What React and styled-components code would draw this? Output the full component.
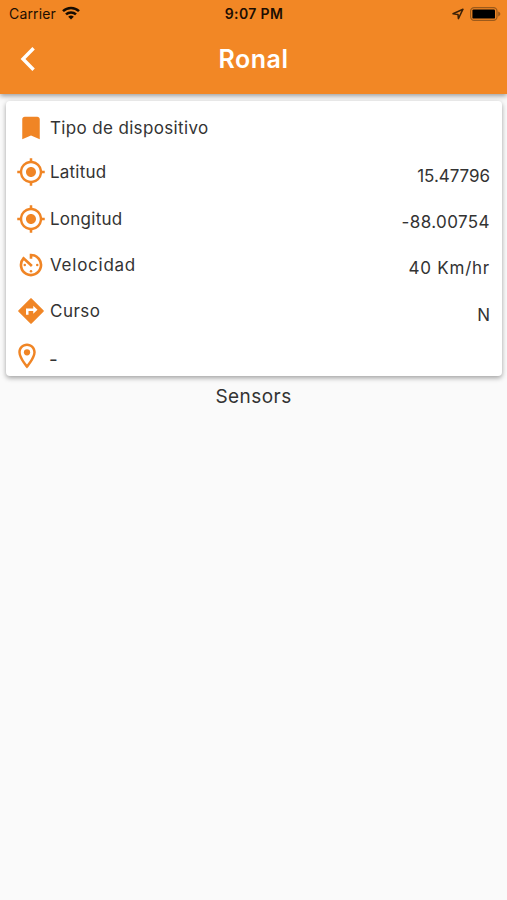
import React from 'react'
import styled, { createGlobalStyle } from 'styled-components'
import { MdBookmark, MdMyLocation, MdOutlineLocationOn } from 'react-icons/md'

function TurnIcon() {
  return (
    <svg width="1em" height="1em" viewBox="0 0 24 24">
      <path d="M12 2.2 21.8 12 12 21.8 2.2 12z" fill="currentColor" stroke="currentColor" strokeWidth="0.9" strokeLinejoin="round" />
      <path d="M9 15v-4.1h5.4" fill="none" stroke="#fff" strokeWidth="2" />
      <path d="M13.8 7.7 17.2 10.9l-3.4 3.3z" fill="#fff" />
    </svg>
  )
}

function SpeedIcon() {
  return (
    <svg width="1em" height="1em" viewBox="0 0 24 24" fill="none" stroke="currentColor" strokeWidth="2.1">
      <path d="M12 7V4a8 8 0 1 1-5.9 2.6l6.6 6.2" />
      <g fill="currentColor" stroke="none">
        <circle cx="12" cy="17" r="1" />
        <circle cx="17" cy="12" r="1" />
        <circle cx="7" cy="12" r="1" />
      </g>
    </svg>
  )
}

const rows = [
    { icon: MdMyLocation, label: 'Latitud', value: '15.47796', spacing: '0.2px', valueSpacing: '-0.05px' },
    { icon: MdMyLocation, label: 'Longitud', value: '-88.00754', spacing: '0.25px', valueSpacing: '0.4px' },
    { icon: SpeedIcon, label: 'Velocidad', value: '40 Km/hr', spacing: '0.75px', valueSpacing: '0.75px' },
    { icon: TurnIcon, label: 'Curso', value: 'N', spacing: '0.5px', valueSpacing: '0px' },
]

function StatusBar() {
  return (
    <Status>
      <Carrier>
        <span>Carrier</span>
        <svg width="18" height="14" viewBox="0 0 18 14" fill="none" stroke="#160c02" strokeWidth="2.5">
          <path d="M1 5.2a11.5 11.5 0 0 1 16 0" />
          <path d="M4 8.4a7.2 7.2 0 0 1 10 0" />
          <path d="M9 13.6 6.2 10.8a4 4 0 0 1 5.6 0z" fill="#160c02" stroke="none" />
        </svg>
      </Carrier>
      <Clock>9:07 PM</Clock>
      <StatusIcons>
        <svg width="12" height="12" viewBox="0 0 12 12" fill="none" stroke="#3b2108" strokeWidth="1.5" strokeLinejoin="round">
          <path d="M1 5.8 11 1.2 6.4 10.6 6 6.4z" />
        </svg>
        <svg width="31" height="14" viewBox="0 0 31 14">
          <rect x="0.6" y="0.6" width="26.4" height="12.8" rx="3.6" fill="none" stroke="#9c5a1b" strokeWidth="1.2" />
          <rect x="2.4" y="2.4" width="22.6" height="9.2" rx="1.2" fill="#000" />
          <path d="M28.2 4.6c2.8.8 2.8 4 0 4.8z" fill="#9c5a1b" />
        </svg>
      </StatusIcons>
    </Status>
  )
}

export default function App() {
  return (
    <>
      <GlobalStyle />
      <Screen>
        <Header>
          <StatusBar />
          <Toolbar>
            <BackButton aria-label="Back">
              <svg width="16" height="26" viewBox="0 0 16 26" fill="none" stroke="#fff" strokeWidth="3.4">
                <path d="M13.6 2.2 3 13l10.6 10.8" />
              </svg>
            </BackButton>
            <Title>Ronal</Title>
          </Toolbar>
        </Header>
        <Card>
          <TypeRow>
            <IconBox><MdBookmark /></IconBox>
            <Label $spacing="0.35px">Tipo de dispositivo</Label>
          </TypeRow>
          {rows.map(({ icon: Icon, label, value, spacing, valueSpacing }) => (
            <Row key={label}>
              <IconBox><Icon /></IconBox>
              <Label $spacing={spacing}>{label}</Label>
              <Value $spacing={valueSpacing}>{value}</Value>
            </Row>
          ))}
          <AddressRow>
            <IconBox><MdOutlineLocationOn /></IconBox>
            <Address>-</Address>
          </AddressRow>
        </Card>
        <SectionTitle>Sensors</SectionTitle>
      </Screen>
    </>
  )
}

const GlobalStyle = createGlobalStyle`
  * {
    box-sizing: border-box;
  }
  body {
    margin: 0;
    background: #fafafa;
    font-family: Inter, "Liberation Sans", sans-serif;
    color: #333;
  }
`
const Screen = styled.div`
  min-height: 900px;
  background: #fafafa;
`
const Header = styled.header`
  height: 94px;
  background: #f28725;
  box-shadow: 0 2px 5px rgba(0, 0, 0, 0.38);
`
const Status = styled.div`
  height: 27px;
  display: grid;
  grid-template-columns: 1fr auto 1fr;
  align-items: center;
  padding: 0 6px 0 9px;
  color: #1c0e02;
`
const Carrier = styled.div`
  display: flex;
  align-items: center;
  gap: 6px;
  font-size: 14px;
  line-height: 27px;
  letter-spacing: 0.15px;
  svg {
    margin-top: -2px;
  }
`
const Clock = styled.div`
  font-size: 14px;
  font-weight: 600;
  letter-spacing: 0.35px;
  margin-right: 2px;
`
const StatusIcons = styled.div`
  display: flex;
  justify-content: flex-end;
  align-items: center;
  gap: 6px;
`
const Toolbar = styled.div`
  height: 64px;
  display: grid;
  grid-template-columns: 60px 1fr 60px;
  align-items: center;
`
const BackButton = styled.button`
  display: flex;
  padding: 0 0 0 20px;
  border: 0;
  background: none;
`
const Title = styled.h1`
  margin: 0;
  font-size: 25px;
  line-height: 30px;
  font-weight: 600;
  letter-spacing: 0.5px;
  text-align: center;
  color: #fff;
`
const Card = styled.section`
  height: 275px;
  margin: 7px 5px 0 6px;
  padding: 5px 12px 0 10px;
  border-radius: 4px;
  background: #fff;
  box-shadow: 0 2px 5px rgba(0, 0, 0, 0.36);
`
const Row = styled.div`
  display: flex;
  align-items: center;
  height: 46.4px;
`
const TypeRow = styled(Row)`
  height: 43px;
`
const AddressRow = styled(Row)`
  height: 42px;
  margin-left: -4px;
`
const IconBox = styled.span`
  display: flex;
  font-size: 30px;
  color: #f08525;
`
const Label = styled.span`
  margin-left: 4px;
  font-size: 17px;
  line-height: 24px;
  letter-spacing: ${(props) => props.$spacing};
`
const Value = styled.span`
  margin-left: auto;
  padding-top: 7px;
  font-size: 17px;
  line-height: 24px;
  letter-spacing: ${(props) => props.$spacing};
`
const Address = styled.span`
  margin-left: 7px;
  padding-top: 8px;
  font-size: 19px;
  line-height: 24px;
`
const SectionTitle = styled.h2`
  margin: 7px 0 0;
  font-size: 19px;
  line-height: 28px;
  font-weight: 400;
  letter-spacing: 0.45px;
  text-align: center;
`
